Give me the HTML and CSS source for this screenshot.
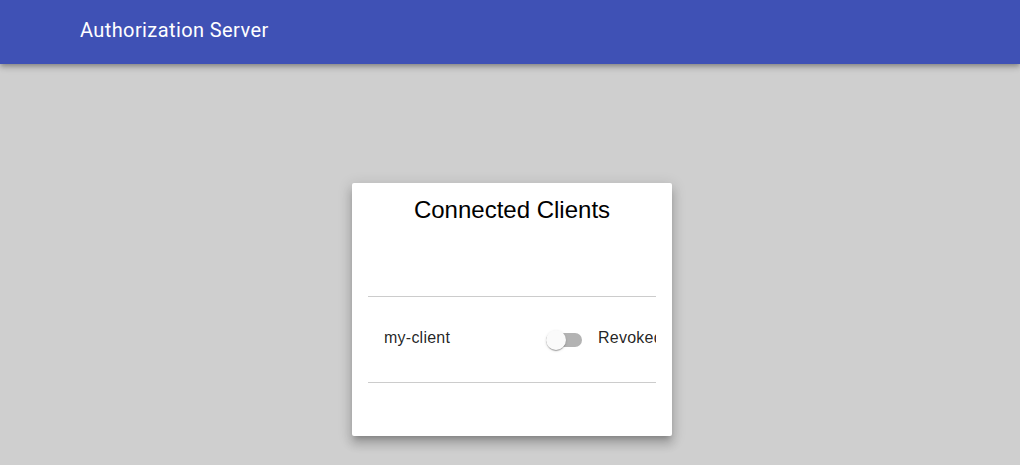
FILE: index.html
```html
<!DOCTYPE html>
<html lang="en">
<head>
    <meta charset="UTF-8">
    <meta name="viewport" content="width=device-width, initial-scale=1.0">
    <title>Authorization Server</title>
    <link rel="stylesheet" href="styles.css">
</head>
<body>
    <header class="toolbar">
        <span class="toolbar_title">Authorization Server</span>
    </header>
    <main class="content">
        <div class="card">
            <h2 class="card_title">Connected Clients</h2>
            <div class="client_list">
                <div class="client_row">
                    <span class="client_name">my-client</span>
                    <label class="toggle">
                        <span class="toggle_bar"><span class="toggle_thumb"></span></span>
                        <span class="toggle_label">Revoked</span>
                    </label>
                </div>
            </div>
        </div>
    </main>
</body>
</html>
```

FILE: styles.css
```css
html, body{
    margin: 0;
    height: 100%;
}
body{
    background: #cfcfcf;
    font-family: "Liberation Sans", Arial, sans-serif;
    overflow: hidden;
}
.toolbar{
    height: 64px;
    display: flex;
    align-items: center;
    padding-left: 80px;
    background: #3f51b5;
    color: white;
    box-shadow: 0 2px 4px -1px rgba(0,0,0,.2), 0 4px 5px 0 rgba(0,0,0,.14), 0 1px 10px 0 rgba(0,0,0,.12);
    position: relative;
}
.toolbar_title{
    font-family: Roboto, sans-serif;
    font-size: 20px;
    font-weight: 400;
    letter-spacing: .02em;
    margin-top: -4px;
}
.content{
    display: flex;
    justify-content: center;
    padding-top: 119px;
    padding-left: 4px;
}
.card{
    width: 288px;
    padding: 11px 16px 53px;
    background: white;
    border-radius: 2px;
    box-shadow: 0 5px 5px -3px rgba(0,0,0,.2), 0 8px 10px 1px rgba(0,0,0,.14), 0 3px 14px 2px rgba(0,0,0,.12);
}
.card_title{
    margin: 0;
    text-align: center;
    font-size: 24px;
    font-weight: 400;
    line-height: 32px;
    color: #000;
}
.client_list{
    margin-top: 70px;
    border-top: 1px solid #cccccc;
    border-bottom: 1px solid #cccccc;
}
.client_row{
    height: 82px;
    padding-bottom: 3px;
    display: flex;
    align-items: center;
    padding-left: 16px;
    overflow: hidden;
    white-space: nowrap;
    color: rgba(0,0,0,.87);
    font-size: 16px;
    letter-spacing: .015em;
}
.client_name{
    flex: 0 0 162px;
}
.toggle{
    display: flex;
    align-items: center;
}
.toggle_bar{
    position: relative;
    width: 36px;
    height: 14px;
    margin-top: 4px;
    border-radius: 7px;
    background: #b3b3b3;
}
.toggle_thumb{
    position: absolute;
    left: 0;
    top: -3px;
    width: 20px;
    height: 20px;
    border-radius: 50%;
    background: #fafafa;
    box-shadow: 0 2px 1px -1px rgba(0,0,0,.2), 0 1px 1px 0 rgba(0,0,0,.14), 0 1px 3px 0 rgba(0,0,0,.12);
}
.toggle_label{
    margin-left: 16px;
}
```
